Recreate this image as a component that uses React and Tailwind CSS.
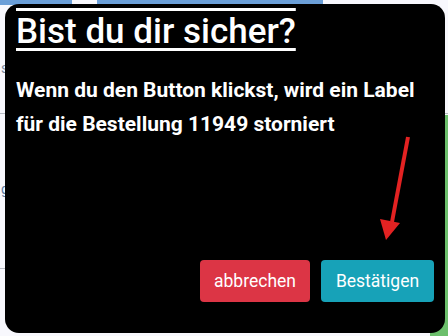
export default function App() {
  return (
    <div className="relative w-[448px] h-[336px] overflow-hidden bg-[#f8f8fd]" style={{ fontFamily: "Roboto, 'Noto Sans', sans-serif" }}>
      {/* background page */}
      <div className="flex h-[5px]">
        <div className="w-[72px] bg-[#6b9fd8]" />
        <div className="w-[25px] bg-[#f8f8fd] rounded-t-full" />
        <div className="w-[226px] bg-[#6b9fd8]" />
      </div>
      <div className="flex flex-col">
        <div className="h-[60px] pl-[1px] pt-[56px] text-[14px] leading-none text-[#7a8aa0]">s</div>
        <div className="mt-[48px] h-px bg-[#b8bcc4]" />
        <div className="pl-[1px] mt-[68px] text-[14px] leading-none text-[#5a7aa0]">g</div>
        <div className="mt-[72px] h-px bg-[#b8bcc4]" />
      </div>
      <div className="absolute right-0 top-[115px] bottom-0 w-[18px] bg-[#6cbf6c]" />

      {/* modal */}
      <div className="absolute left-[5px] top-[4px] w-[440px] h-[329px] bg-black rounded-[14px] flex flex-col px-[11px] text-white">
        <h1 className="mt-[6px] text-[35px] font-medium leading-[44px] [text-decoration-line:underline_overline] decoration-[3px] underline-offset-[5px] self-start">
          Bist du dir sicher?
        </h1>
        <p className="mt-[19px] text-[21px] font-bold leading-[34px]">
          Wenn du den Button klickst, wird ein Label
          <br />
          für die Bestellung 11949 storniert
        </p>
        <div className="mt-auto mb-[31px] flex justify-end gap-[11px]">
          <button className="w-[110px] h-[42px] rounded-[4px] bg-[#dc3545] text-[17.5px] text-white">abbrechen</button>
          <button className="w-[113px] h-[42px] rounded-[4px] bg-[#17a2b8] text-[17.5px] text-white">Bestätigen</button>
        </div>
      </div>

      {/* red annotation arrow */}
      <svg className="absolute left-0 top-0" width="448" height="336" viewBox="0 0 448 336">
        <line x1="408" y1="137" x2="392" y2="222" stroke="#e32222" strokeWidth="4" />
        <polygon points="386,240 380,219 400,223" fill="#e32222" />
      </svg>
    </div>
  );
}
